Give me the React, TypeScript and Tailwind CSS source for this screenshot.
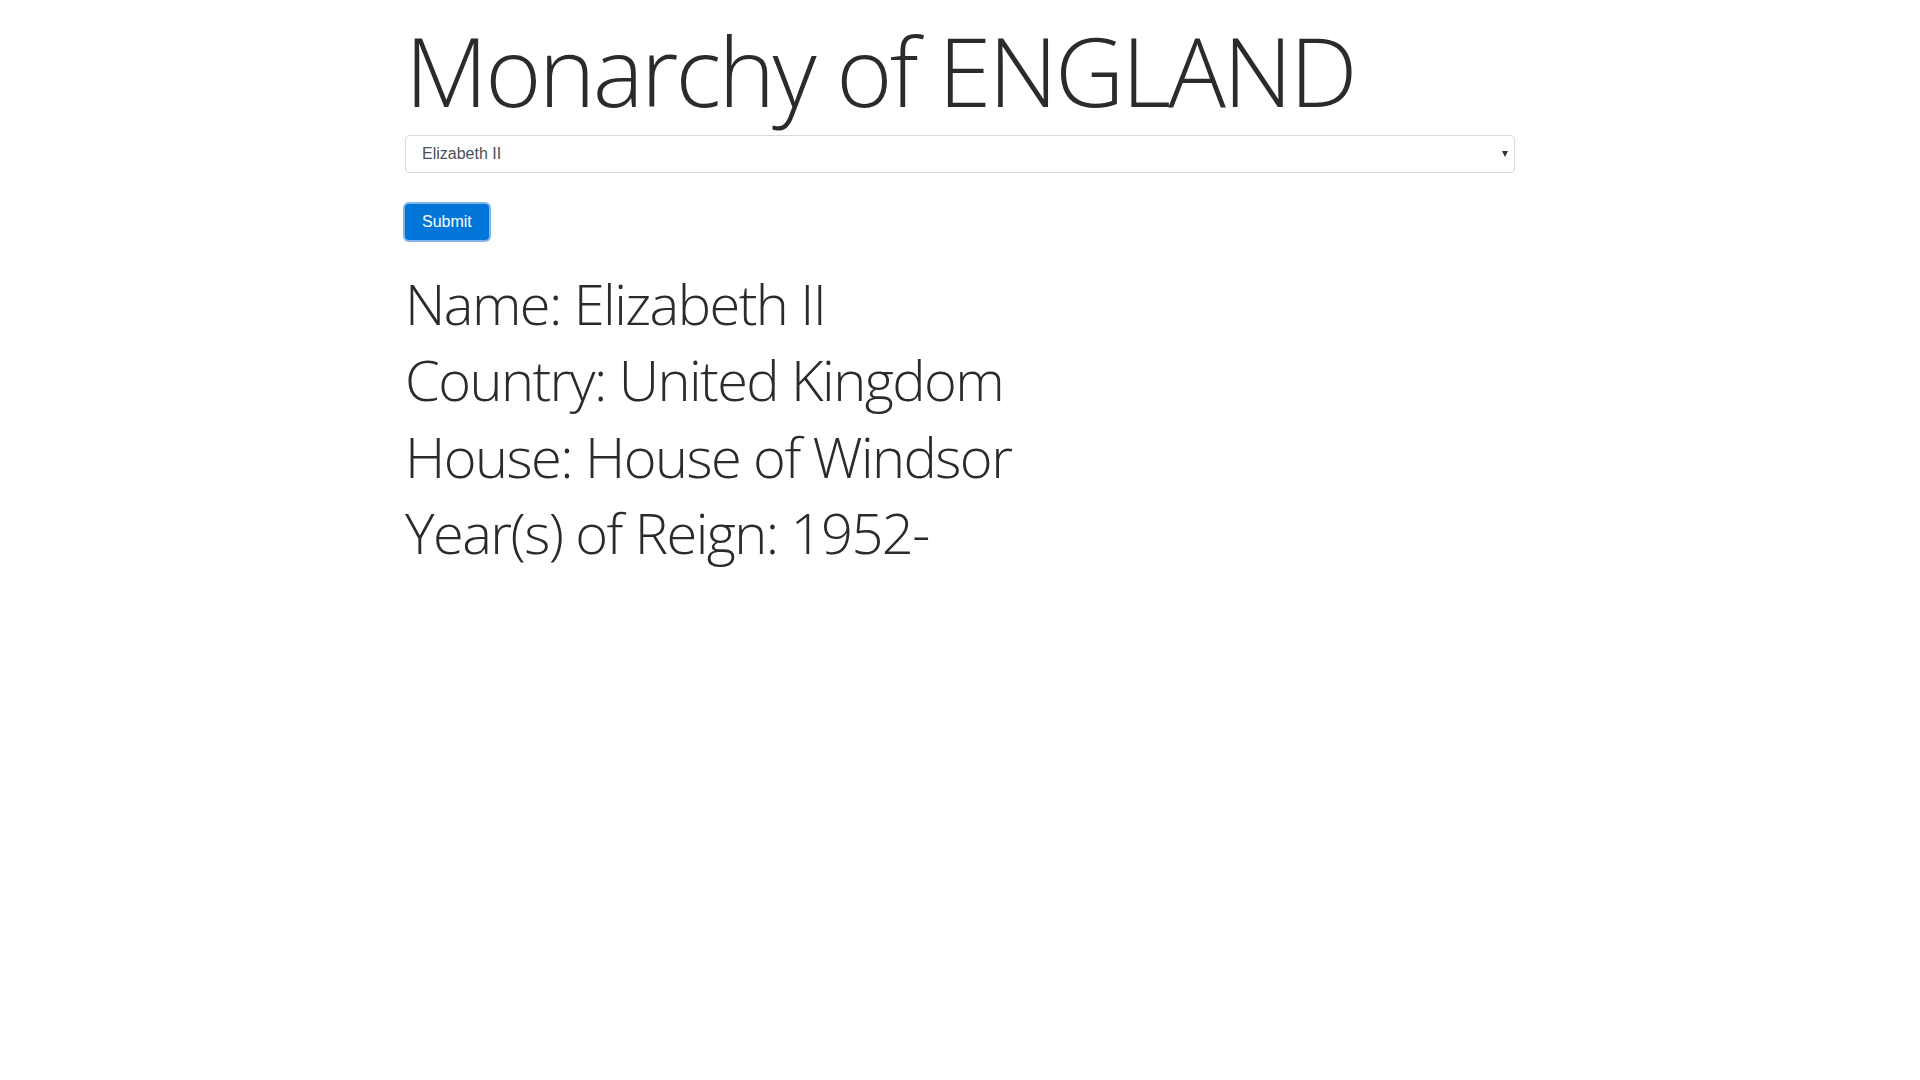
import { useState } from "react";

const MONARCHS = [
  {
    name: "Elizabeth II",
    country: "United Kingdom",
    house: "House of Windsor",
    reign: "1952-",
  },
  {
    name: "George VI",
    country: "United Kingdom",
    house: "House of Windsor",
    reign: "1936-1952",
  },
  {
    name: "Victoria",
    country: "United Kingdom",
    house: "House of Hanover",
    reign: "1837-1901",
  },
];

const display =
  "font-['Open_Sans',sans-serif] font-light tracking-[-0.028em] text-[#292b2c]";

export default function App() {
  const [choice, setChoice] = useState(MONARCHS[0].name);
  const [shown, setShown] = useState(MONARCHS[0]);

  return (
    <div className="min-h-screen bg-white font-['Liberation_Sans',Arial,sans-serif]">
      <div className="mx-auto w-[1110px] pt-[12px]">
        <h1 className={`${display} mb-2 text-[96px] leading-[1.2]`}>
          Monarchy of ENGLAND
        </h1>

        <div className="relative">
          <select
            value={choice}
            onChange={(e) => setChoice(e.target.value)}
            className="h-[38px] w-full appearance-none rounded-[4px] border border-[#d9d9d9] bg-white px-[16px] text-[16px] text-[#495057] outline-none"
          >
            {MONARCHS.map((m) => (
              <option key={m.name} value={m.name}>
                {m.name}
              </option>
            ))}
          </select>
          <span className="pointer-events-none absolute right-[7px] top-[16px] h-0 w-0 border-x-[3.5px] border-t-[6px] border-x-transparent border-t-[#333]" />
        </div>

        <button
          onClick={() => setShown(MONARCHS.find((m) => m.name === choice)!)}
          className="mt-[31px] h-[36px] rounded-[4px] bg-[#0275d8] px-[17px] text-[16px] text-white ring-2 ring-[#7fb5e8]"
        >
          Submit
        </button>

        <div className={`${display} mt-[30px] text-[56px] leading-[1.2]`}>
          <p className="mb-[9px]">Name: {shown.name}</p>
          <p className="mb-[9px]">Country: {shown.country}</p>
          <p className="mb-[9px]">House: {shown.house}</p>
          <p className="mb-[9px]">Year(s) of Reign: {shown.reign}</p>
        </div>
      </div>
    </div>
  );
}
